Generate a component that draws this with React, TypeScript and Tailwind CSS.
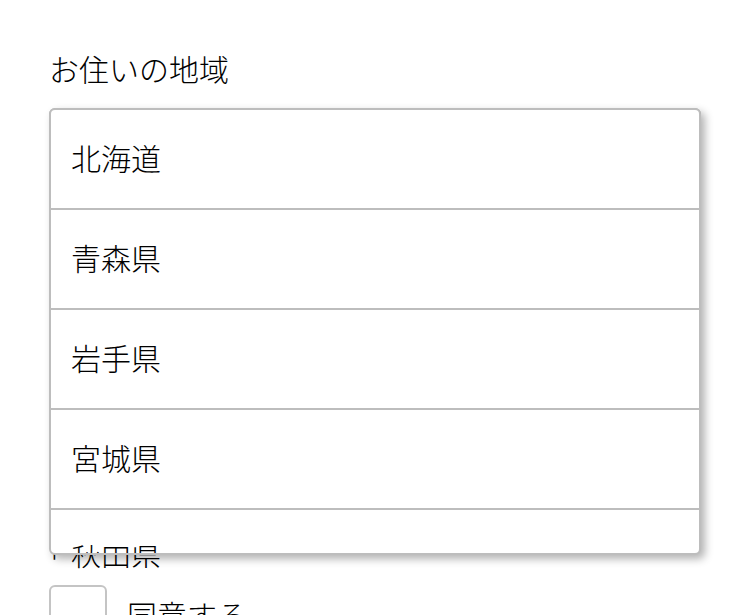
import { useState } from "react";

const PREFS = ["北海道", "青森県", "岩手県", "宮城県", "秋田県", "山形県", "福島県"];

export default function App() {
  const [selected, setSelected] = useState("秋田県");

  return (
    <div
      className="relative min-h-screen bg-white text-black font-light overflow-hidden"
      style={{ fontFamily: '"Noto Sans CJK JP", "Noto Sans", sans-serif' }}
    >
      <div className="px-[49px] pt-[46px]">
        <div className="text-[30px] leading-[45px]">お住いの地域</div>

        {/* select field under the open list */}
        <div className="mt-[17px] h-[60px] w-[652px] rounded-md border-2 border-[#bdbdbd]" />

        <div className="mt-[362px] text-[30px] leading-[45px] whitespace-nowrap">
          <span className="ml-[-15px] inline-block w-[37px]">「</span>
          {selected}
        </div>

        <label className="mt-[10px] flex items-center gap-5">
          <span className="h-[58px] w-[58px] rounded-md border-2 border-[#c4c4c4] bg-white" />
          <span className="text-[30px] leading-[45px]">同意する</span>
        </label>
      </div>

      {/* open listbox */}
      <ul className="absolute left-[49px] top-[108px] h-[447px] w-[652px] overflow-hidden rounded-md border-2 border-[#bdbdbd] bg-white shadow-[4px_4px_8px_rgba(0,0,0,0.3)]">
        {PREFS.map((p) => (
          <li
            key={p}
            onClick={() => setSelected(p)}
            className="flex h-[100px] items-center border-b-2 border-[#bdbdbd] pb-1 pl-5 text-[30px] cursor-pointer"
          >
            {p}
          </li>
        ))}
      </ul>
    </div>
  );
}
